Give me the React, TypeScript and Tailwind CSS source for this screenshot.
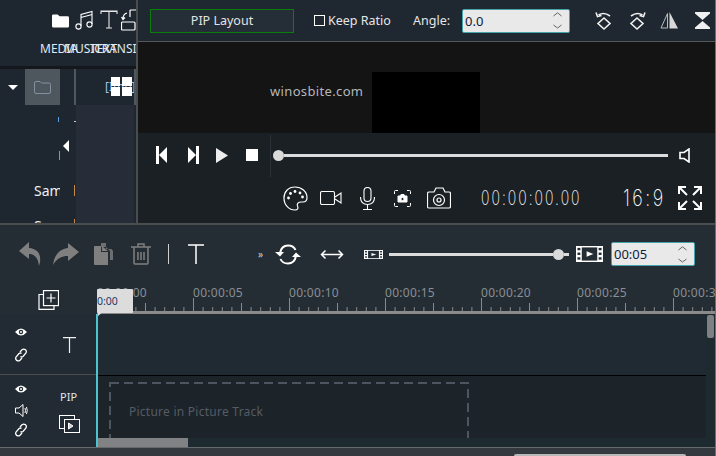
import React from 'react';

const font = { fontFamily: '"Noto Sans", "Open Sans", sans-serif' };

function Folder({ className }: { className?: string }) {
  return (
    <svg className={className} viewBox="0 0 18 14">
      <path d="M0 1.5Q0 0 1.5 0H6L8 2H16.5Q18 2 18 3.5V12.5Q18 14 16.5 14H1.5Q0 14 0 12.5Z" fill="currentColor" />
    </svg>
  );
}

function MediaTabs() {
  return (
    <div className="relative h-[66px] shrink-0 overflow-hidden text-white">
      <Folder className="absolute left-[52px] top-[14px] w-[17px] h-[14px]" />
      <svg className="absolute left-[75px] top-[10px] w-[20px] h-[20px]" viewBox="0 0 20 20" fill="none" stroke="white" strokeWidth="1.1">
        <circle cx="3.5" cy="16.5" r="2.6" />
        <circle cx="14.5" cy="14.5" r="2.6" />
        <path d="M6 16V4.5L17 1.5V14M6 7.5L17 4.5" />
      </svg>
      <svg className="absolute left-[100px] top-[10px] w-[18px] h-[19px]" viewBox="0 0 18 19" fill="none" stroke="#e8e8e8" strokeWidth="1.1">
        <path d="M1 4V1H17V4M1 1.5H17M9 1V18M6 18H12" />
      </svg>
      <svg className="absolute left-[121px] top-[9px] w-[16px] h-[22px]" viewBox="0 0 16 22" fill="none" stroke="white" strokeWidth="1.2">
        <path d="M9 8V2Q9 1 10 1H16M1 21Q0.5 21 0.5 20V14Q0.5 13 1.5 13H13Q14 13 14 14V20Q14 21 13 21Z" />
        <path d="M6 4Q2 5 2 10M0.5 8L2 10.5L4 8.5" />
      </svg>
      <span className="absolute left-[40px] top-[40px] text-[12px] text-[#dfeaf5]">MEDIA</span>
      <span className="absolute left-[64px] top-[40px] text-[12px] text-[#dfeaf5]">MUSIC</span>
      <span className="absolute left-[90px] top-[40px] text-[12px] text-[#dfeaf5]">TEXT</span>
      <span className="absolute left-[95px] top-[40px] text-[12px] text-[#dfeaf5]">TRANSITION</span>
    </div>
  );
}

function MediaTree() {
  return (
    <div className="relative flex-1 overflow-hidden">
      <div className="flex h-[36px]">
        <div className="w-[25px] flex items-center justify-center pl-[1px]">
          <div className="w-0 h-0 border-x-[5px] border-x-transparent border-t-[5px] border-t-white" />
        </div>
        <div className="w-[35px] bg-[#4e565e] flex items-center justify-center">
          <svg className="w-[17px] h-[13px]" viewBox="0 0 17 13" fill="none" stroke="#82919f" strokeWidth="1">
            <path d="M.5 2Q.5.5 2 .5H6L7.5 2H15Q16.5 2 16.5 3.5V11Q16.5 12.5 15 12.5H2Q.5 12.5.5 11Z" />
          </svg>
        </div>
        <div className="w-[14px]" />
        <div className="w-[2px] bg-[#4e565e]" />
        <div className="relative flex-1 overflow-hidden">
          <span className="absolute left-[29px] top-[9px] text-[12px] text-[#9fc4ef]">[Imp]</span>
          <div className="absolute left-[35px] top-[8px] grid grid-cols-2 gap-[1px]">
            <div className="w-[9px] h-[9px] bg-white" />
            <div className="w-[10px] h-[9px] bg-white" />
            <div className="w-[9px] h-[9px] bg-white" />
            <div className="w-[10px] h-[9px] bg-white" />
          </div>
        </div>
        <div className="w-[2px] bg-[#4e565e]" />
      </div>
      <div className="absolute left-[76px] top-[36px] w-[58px] bottom-0 bg-[#262c38]" />
      <div className="absolute left-[74px] top-[52px] w-[2px] h-[1px] bg-[#d0d0d0]" />
      <div className="absolute left-[63px] top-[71px] w-0 h-0 border-y-[6px] border-y-transparent border-r-[6px] border-r-white" />
      <div className="absolute left-[58px] top-[48px] w-[1px] h-[5px] bg-[#5f9fe0]" />
      <div className="absolute left-[59px] top-[82px] w-[1px] h-[9px] bg-[#5f9fe0]" />
      <div className="absolute left-[74px] top-[116px] w-[1px] h-[11px] bg-[#c98a45]" />
      <div className="absolute left-[74px] top-[150px] w-[1px] h-[4px] bg-[#c98a45]" />
      <div className="absolute left-[34px] top-[112px] w-[26px] overflow-hidden text-[14px] leading-[20px] text-[#f0f0f0] whitespace-nowrap">Sample</div>
      <div className="absolute left-[34px] top-[147px] w-[26px] overflow-hidden text-[14px] leading-[20px] text-[#f0f0f0] whitespace-nowrap">Sample</div>
    </div>
  );
}

function Spinner({ value, className }: { value: string; className: string }) {
  return (
    <div className={`${className} h-[24px] flex items-center justify-between pl-[2px] pr-[7px] bg-[#e9e9e9] border border-[#47a3ab] rounded-[2px] text-[13px] text-[#10203a]`}>
      <span className="pt-[2px]">{value}</span>
      <svg className="w-[9px] h-[17px]" viewBox="0 0 9 17" fill="none" stroke="#666" strokeWidth="1">
        <path d="M.5 4L4.5 .8L8.500 4M.5 13L4.5 16L8.500 13" />
      </svg>
    </div>
  );
}

function PreviewToolbar() {
  return (
    <div className="h-[41px] flex items-center pl-[12px] border-b border-[#55595a] bg-[#1f2730] box-content text-[#e6e6e6] text-[12.500px]">
      <button className="w-[144px] h-[24px] pt-[2px] bg-[#252d36] border border-[#0b7d0b] text-[12.500px] text-[#e4e4e4]">PIP Layout</button>
      <div className="ml-[20px] w-[11px] h-[11px] border border-white" />
      <span className="ml-[3px] w-[85px] pt-[2px]">Keep Ratio</span>
      <span className="w-[49px] pt-[2px]">Angle:</span>
      <Spinner value="0.0" className="w-[108px]" />
      <svg className="ml-[25px] w-[18px] h-[20px]" viewBox="0 0 18 20" fill="none" stroke="#f0f0f0" strokeWidth="1.600">
        <path d="M9 7L15 12.500L9 18L3 12.500Z" />
        <path d="M15 5Q9 0.500 3.500 4M1 1.500L2.500 5.500L6.500 4.500" />
      </svg>
      <svg className="ml-[15px] w-[18px] h-[20px]" viewBox="0 0 18 20" fill="none" stroke="#f0f0f0" strokeWidth="1.600">
        <path d="M9 7L15 12.500L9 18L3 12.500Z" />
        <path d="M3 5Q9 0.500 14.500 4M17 1.500L15.500 5.500L11.500 4.500" />
      </svg>
      <svg className="ml-[14px] w-[18px] h-[17px]" viewBox="0 0 18 17">
        <path d="M7.500 1.500L1 16H7.500Z" fill="none" stroke="#bbb" />
        <path d="M9.500 0L18 16.500H9.500Z" fill="#d8d8d8" />
      </svg>
      <svg className="ml-[17px] w-[15px] h-[17px]" viewBox="0 0 15 17">
        <path d="M0 0H15V1.500L7.500 8L0 1.500Z M0 17H15V15.500L7.500 9L0 15.500Z" fill="#f0f0f0" />
        <path d="M1.500 16H13.500" stroke="#f0f0f0" />
      </svg>
    </div>
  );
}

function Palette() {
  return (
    <svg className="w-[25px] h-[25px]" viewBox="0 0 25 25" fill="none" stroke="white" strokeWidth="1.200">
      <path d="M12 1C5 1 1 6 1 12C1 19 6 24 12 24C15 24 15.500 22 14.500 20C13.500 17.500 15.500 16 18 16H20C23 16 24 14 24 11.500C24 5.500 18.500 1 12 1Z" />
      <g fill="white" stroke="none">
        <circle cx="5.500" cy="12" r="1.400" />
        <circle cx="7.500" cy="7.500" r="1.400" />
        <circle cx="12" cy="5.500" r="1.400" />
        <circle cx="17" cy="7" r="1.400" />
        <circle cx="19.500" cy="11" r="1.400" />
      </g>
    </svg>
  );
}

function Transport() {
  return (
    <div className="h-[90px] bg-[#1b2025] text-white flex flex-col">
      <div className="h-[44px] flex items-center pl-[18px] relative">
        <svg className="w-[12px] h-[18px]" viewBox="0 0 12 18" fill="white">
          <path d="M0 0H3V18H0ZM3 9L11 1V17Z" />
        </svg>
        <svg className="ml-[19px] w-[12px] h-[18px]" viewBox="0 0 12 18" fill="white">
          <path d="M9 0H12V18H9ZM9 9L1 1V17Z" />
        </svg>
        <svg className="ml-[17px] w-[12px] h-[15px]" viewBox="0 0 12 15" fill="#eee">
          <path d="M0 0L12 7.500L0 15Z" />
        </svg>
        <div className="ml-[18px] w-[12px] h-[12px] bg-white" />
        <div className="ml-[12px] w-[1px] h-[42px] mt-[2px] bg-[#2c3238]" />
        <div className="ml-[2px] w-[11px] h-[11px] rounded-full bg-[#d9d9d9]" />
        <div className="w-[384px] h-[3px] bg-[#dcdcdc]" />
        <svg className="ml-[11px] w-[11px] h-[15px]" viewBox="0 0 11 15" fill="none" stroke="white" strokeWidth="1.600">
          <path d="M10 1V14L5 10.500H1V4.500H5Z" />
        </svg>
      </div>
      <div className="h-[34px] mt-[4px] flex items-center pl-[145px]">
        <Palette />
        <svg className="ml-[12px] w-[22px] h-[14px]" viewBox="0 0 22 14" fill="none" stroke="white" strokeWidth="1.100">
          <rect x=".5" y=".5" width="14" height="13" rx="1.500" />
          <path d="M15 6L21 2V12L15 8" />
        </svg>
        <svg className="ml-[18px] w-[15px] h-[23px]" viewBox="0 0 15 23" fill="none" stroke="white" strokeWidth="1.100">
          <rect x="4" y=".5" width="7" height="14" rx="3.500" />
          <path d="M.5 10C.5 15 3.500 17.500 7.500 17.500S14.500 15 14.500 10M7.500 17.500V22M3 22.500H12" />
        </svg>
        <svg className="ml-[19px] w-[17px] h-[17px]" viewBox="0 0 17 17" fill="none" stroke="white" strokeWidth="1">
          <path d="M.5 4V1.500Q.5.500 1.500.500H4M13 .5H15.500Q16.500.500 16.500 1.500V4M16.500 13V15.500Q16.500 16.500 15.500 16.500H13M4 16.500H1.500Q.5 16.500 .5 15.500V13" />
          <path d="M4 6H6L7 4.500H10L11 6H13V12H4Z" fill="white" />
          <circle cx="8.500" cy="9" r="1.600" fill="#1b2025" />
        </svg>
        <svg className="ml-[16px] w-[24px] h-[22px]" viewBox="0 0 24 22" fill="none" stroke="white" strokeWidth="1.200">
          <path d="M2 5H7L9 1H16L18 5H22Q23.500 5 23.500 6.500V19.500Q23.500 21 22 21H2Q.5 21 .5 19.500V6.500Q.5 5 2 5Z" />
          <circle cx="12" cy="13" r="5.500" />
          <circle cx="12" cy="13" r="2" />
        </svg>
        <span className="ml-[30px] w-[102px] font-['Inter'] font-extralight text-[14px] leading-none tracking-[2px] text-white scale-y-[1.450] whitespace-nowrap">00:00:00.00</span>
        <span className="ml-[40px] w-[55px] font-['Inter'] font-extralight text-[18px] leading-none tracking-[2.500px] text-white scale-y-[1.300]">16:9</span>
        <svg className="w-[24px] h-[24px]" viewBox="0 0 24 24" fill="none" stroke="white" strokeWidth="2">
          <path d="M1 8V1H8M2 2L9 9" />
          <path d="M23 8V1H16M22 2L15 9" />
          <path d="M1 16V23H8M2 22L9 15" />
          <path d="M23 16V23H16M22 22L15 15" />
        </svg>
      </div>
    </div>
  );
}

function Preview() {
  return (
    <div className="flex-1 flex flex-col min-w-0">
      <PreviewToolbar />
      <div className="h-[91px] bg-[#141414] flex items-end">
        <span className="ml-[132px] mb-[33px] w-[102px] text-[13px] tracking-[.35px] text-[#b4b8bc] leading-[18px]">winosbite.com</span>
        <div className="w-[108px] h-[61px] bg-black" />
      </div>
      <Transport />
    </div>
  );
}

function FilmStrip({ className }: { className: string }) {
  return (
    <svg className={className} viewBox="0 0 28 17" preserveAspectRatio="none">
      <rect width="28" height="17" fill="white" />
      <rect x="6" y="1.500" width="16" height="14" fill="#242c34" />
      <path d="M11 5.500L18 8.500L11 11.500Z" fill="white" />
      <g fill="#242c34">
        <rect x="1.500" y="2" width="3" height="2.500" />
        <rect x="1.500" y="7" width="3" height="2.500" />
        <rect x="1.500" y="12" width="3" height="2.500" />
        <rect x="23.500" y="2" width="3" height="2.500" />
        <rect x="23.500" y="7" width="3" height="2.500" />
        <rect x="23.500" y="12" width="3" height="2.500" />
      </g>
    </svg>
  );
}

function EditToolbar() {
  return (
    <div className="h-[60px] shrink-0 flex items-center pl-[19px] pb-[2px]">
      <svg className="w-[23px] h-[24px]" viewBox="0 0 23 24" fill="#7f7f7f">
        <path d="M10 0L0 9L10 17V12C15 12 19 15 20 24C22.500 17 22 7 10 6Z" />
      </svg>
      <svg className="ml-[11px] w-[26px] h-[22px]" viewBox="0 0 26 22" fill="#7f7f7f">
        <path d="M15 0L26 9L15 18V13C9 13 4 15 0 22C1 13 6 6 15 5Z" />
      </svg>
      <svg className="ml-[15px] w-[19px] h-[22px]" viewBox="0 0 19 22" fill="#7f7f7f">
        <path d="M7 0H12V6H17.500L19 8V17H16V8L12 4H7Z" opacity=".8" />
        <path d="M1 3H7V9H14V22H1Q0 22 0 21V4Q0 3 1 3Z" />
        <path d="M8 3L14 8H8Z" />
      </svg>
      <svg className="ml-[18px] w-[20px] h-[22px]" viewBox="0 0 20 22" fill="none" stroke="#7f7f7f" strokeWidth="1.500">
        <path d="M0 4H20M7 4V1H13V4M3 4V20Q3 21 4 21H16Q17 21 17 20V4M7 9V17M10 9V17M13 9V17" />
      </svg>
      <div className="ml-[17px] w-[1px] h-[20px] bg-[#cfcfcf]" />
      <svg className="ml-[19px] w-[16px] h-[20px]" viewBox="0 0 16 20" fill="none" stroke="white" strokeWidth="1.500">
        <path d="M0 1H16M8 1V20" />
      </svg>
      <span className="ml-[54px] w-[6px] text-[10px] leading-none text-[#d0d0d0]">»</span>
      <svg className="ml-[11px] w-[26px] h-[21px]" viewBox="0 0 26 21" fill="none" stroke="white" strokeWidth="2">
        <path d="M5 9C6 4 9 1.500 13 1.500C17 1.500 19.500 3.500 20.500 6" />
        <path d="M21 12C20 17 17 19.500 13 19.500C9 19.500 6.500 17.500 5.500 15" />
        <path d="M0 8H9L5 12.500Z M26 13H17L21 8.500Z" fill="white" stroke="none" />
      </svg>
      <svg className="ml-[19px] w-[24px] h-[11px]" viewBox="0 0 24 11" fill="none" stroke="white" strokeWidth="1.500">
        <path d="M2 5.500H22M5.500 1.500L1.500 5.500L5.500 9.500M18.500 1.500L22.500 5.500L18.500 9.500" />
      </svg>
      <FilmStrip className="ml-[20px] w-[19px] h-[9px]" />
      <div className="ml-[6px] w-[164px] h-[3px] bg-[#dcdcdc]" />
      <div className="w-[11px] h-[11px] rounded-full bg-[#d9d9d9]" />
      <div className="w-[5px] h-[3px] bg-[#dcdcdc]" />
      <FilmStrip className="ml-[7px] w-[27px] h-[16px]" />
      <Spinner value="00:05" className="ml-[8px] w-[84px]" />
    </div>
  );
}

const rulerLabels = ['00:00:05', '00:00:10', '00:00:15', '00:00:20', '00:00:25', '00:00:30'];

function Ruler() {
  const ticks = Array.from({ length: 65 }, (_, i) => i);
  return (
    <div className="relative h-[29px] shrink-0 overflow-hidden">
      <svg className="absolute left-[38px] top-[5px] w-[21px] h-[20px]" viewBox="0 0 21 20" fill="none" stroke="white" strokeWidth="1.200">
        <rect x="5.500" y=".6" width="15" height="15" />
        <path d="M5 4.500H1V19.400H16V16M13 3.500V12.500M8.500 8H17.500" />
      </svg>
      <span className="absolute left-[97px] -top-[1px] text-[12px] leading-[18px] tracking-[.3px] text-[#8a8f93] whitespace-nowrap">00:00:00</span>
      {rulerLabels.map((t, i) => (
        <span key={t} className="absolute -top-[1px] text-[12px] leading-[18px] tracking-[.3px] text-[#8a8f93] whitespace-nowrap" style={{ left: 193 + i * 96 }}>{t}</span>
      ))}
      <svg className="absolute left-[97px] top-0 w-[619px] h-[29px]" viewBox="0 0 619 29" stroke="#8a8a8a">
        <path d="M0 27.500H619" strokeWidth="3" />
        {ticks.map((i) => {
          const x = 96 + (i - 10) * 9.6 + .5;
          const h = i % 10 === 0 ? 14 : i % 5 === 0 ? 9 : 5;
          return <path key={i} d={`M${x} 27V${27 - h}`} strokeWidth="1" />;
        })}
      </svg>
      <div className="absolute left-[97px] top-[4px] w-[36px] h-[24px] bg-[#dcdcdc] rounded-[1px] overflow-hidden pt-[5px] text-[10.500px] leading-[14px] text-[#1c3a66]">0:00</div>
    </div>
  );
}

function TrackHead({ children, className }: { children: React.ReactNode; className: string }) {
  return <div className={`${className} w-[97px] flex border-b border-[#4b4f4f] bg-[#222b33]`}>{children}</div>;
}

function Eye() {
  return (
    <svg className="w-[12px] h-[8px]" viewBox="0 0 12 8">
      <path d="M0 4Q6 -3 12 4Q6 11 0 4Z" fill="white" />
      <circle cx="6" cy="4" r="2.200" fill="#222b33" />
      <circle cx="6" cy="4" r="1" fill="white" />
    </svg>
  );
}

function LinkIcon() {
  return (
    <svg className="w-[14px] h-[14px]" viewBox="0 0 13 14" fill="none" stroke="white" strokeWidth="1.300">
      <path d="M5.500 4L7.500 1.800Q9 .5 10.800 1.600Q12.500 3 11.500 5L8.500 8.500Q7 9.500 6 8.500" />
      <path d="M7.500 10L5.500 12.200Q4 13.500 2.200 12.400Q.5 11 1.500 9L4.500 5.500Q6 4.500 7 5.500" />
    </svg>
  );
}

function Timeline() {
  return (
    <div className="relative flex-1 min-h-0 flex flex-col">
      <div className="flex-1 flex min-h-0">
        <div className="flex flex-col">
          <TrackHead className="h-[61px]">
            <div className="w-[42px] flex flex-col items-center pt-[14px] gap-[12px]">
              <Eye />
              <LinkIcon />
            </div>
            <div className="flex-1 pl-[21px] pt-[23px]">
              <svg className="w-[13px] h-[16px]" viewBox="0 0 13 16" fill="none" stroke="#f0f0f0" strokeWidth="1.200">
                <path d="M0 .6H13M6.500 .5V16" />
              </svg>
            </div>
          </TrackHead>
          <div className="flex-1 w-[97px] flex bg-[#222b33]">
            <div className="w-[42px] flex flex-col items-center pt-[10px]">
              <Eye />
              <svg className="mt-[11px] w-[13px] h-[13px]" viewBox="0 0 13 13" fill="none" stroke="white" strokeWidth="1">
                <path d="M8 .5V12.500L4 9H.5V4H4Z M10 4Q11 6.500 10 9M11.500 3Q13 6.500 11.500 10" />
              </svg>
              <div className="mt-[6px] flex">
                <LinkIcon />
              </div>
            </div>
            <div className="flex-1 flex flex-col items-start pl-[17px] pt-[15px]">
              <span className="text-[11px] leading-[14px] ml-[1px] text-[#dfe6f0]">PIP</span>
              <svg className="mt-[11px] w-[21px] h-[18px]" viewBox="0 0 21 18" fill="none" stroke="white" strokeWidth="1">
                <rect x=".5" y=".5" width="15" height="13" />
                <rect x="5.500" y="4.500" width="15" height="13" fill="#222b33" />
                <path d="M9.500 8L14 11L9.500 14Z" fill="#cfcfcf" />
              </svg>
            </div>
          </div>
        </div>
        <div className="relative flex-1 min-w-0 flex flex-col border-l-2 border-[#4cc4cf] -ml-[1px]">
          <div className="h-[62px] shrink-0 bg-[#202a33] border-b border-black" />
          <div className="flex-1 bg-[#1c2329] pl-[11px] pt-[6px] overflow-hidden">
            <div className="relative w-[360px] h-[80px] pl-[20px] pt-[18px] text-[12px] leading-[24px] tracking-[.25px] text-[#565b64]">
              Picture in Picture Track
              <svg className="absolute inset-0 w-[360px] h-[80px]" viewBox="0 0 360 80" fill="none" stroke="#4f5560" strokeWidth="2" strokeDasharray="9 5">
                <rect x="1" y="1" width="358" height="78" />
              </svg>
            </div>
          </div>
          <div className="h-[9px] shrink-0 bg-[#1d2a2f]">
            <div className="w-[90px] h-full bg-[#808284]" />
          </div>
          <div className="absolute right-0 top-0 bottom-0 w-[10px] bg-[#1d2a2f] pt-[1px] pl-[1px]">
            <div className="w-[7px] h-[23px] bg-[#7e8184] rounded-[2px]" />
          </div>
          <div className="absolute left-0 -top-[3px] w-0 h-0 border-t-[5px] border-t-[#dcdcdc] border-r-[6px] border-r-transparent" />
        </div>
      </div>
      <div className="h-[1px] shrink-0 bg-[#666a6c]" />
      <div className="h-[8px] shrink-0 bg-[#33393f] pl-[514px] pt-[6px]">
        <div className="w-[172px] h-[2px] bg-[#b8b8b8] rounded-t-[2px]" />
      </div>
    </div>
  );
}

export default function App() {
  return (
    <div className="relative w-[716px] h-[456px] overflow-hidden flex flex-col bg-[#242c34] text-white" style={font}>
      <div className="h-[223px] shrink-0 flex">
        <div className="w-[136px] shrink-0 flex flex-col bg-[#1e2730]">
          <MediaTabs />
          <div className="h-[3px] bg-[#14181c]" />
          <MediaTree />
        </div>
        <div className="w-[2px] shrink-0 bg-[#4a4d4d]" />
        <Preview />
      </div>
      <div className="h-[2px] shrink-0 bg-[#4a4d4d]" />
      <EditToolbar />
      <Ruler />
      <Timeline />
      <div className="absolute right-0 top-0 bottom-0 w-[1px] bg-[#2a7fc9]" />
    </div>
  );
}
